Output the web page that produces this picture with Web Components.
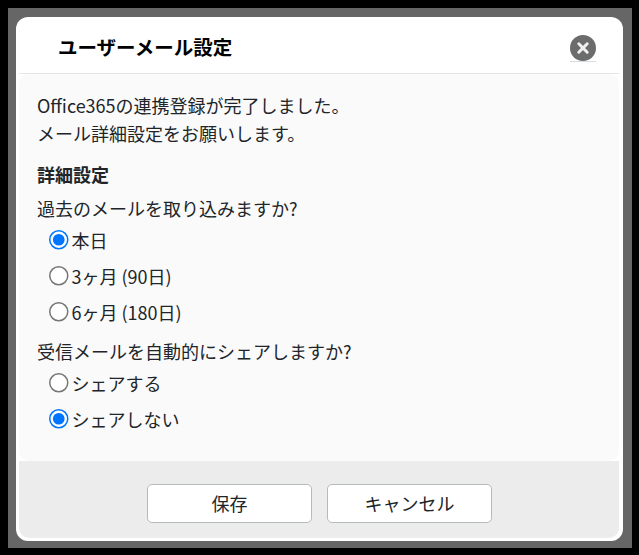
<!DOCTYPE html>
<html lang="ja">
<head>
<meta charset="utf-8">
<title>ユーザーメール設定</title>
<style>
html, body { margin: 0; padding: 0; height: 100%; background: #000; }
body { box-sizing: border-box; height: 555px; padding: 8px 7px 7px 8px; font-family: "Noto Sans CJK JP", "Noto Sans", sans-serif; }
</style>
</head>
<body>
<mail-settings-dialog>
	<span slot="title">ユーザーメール設定</span>
	<p class="intro" style="margin:0 0 13px;font-size:18px;line-height:28px;color:#212529">Office365の連携登録が完了しました。<br>メール詳細設定をお願いします。</p>
	<div style="font-size:18px;line-height:28px;font-weight:700;color:#212529;margin-bottom:6px">詳細設定</div>
	<radio-group question="過去のメールを取り込みますか?" name="past">
		<radio-row value="today" checked>本日</radio-row>
		<radio-row value="90">3ヶ月 (90日)</radio-row>
		<radio-row value="180">6ヶ月 (180日)</radio-row>
	</radio-group>
	<radio-group question="受信メールを自動的にシェアしますか?" name="share">
		<radio-row value="yes">シェアする</radio-row>
		<radio-row value="no" checked>シェアしない</radio-row>
	</radio-group>
	<dialog-button slot="footer">保存</dialog-button>
	<dialog-button slot="footer">キャンセル</dialog-button>
</mail-settings-dialog>

<script>
'use strict';

const dialogTemplate = document.createElement('template');
dialogTemplate.innerHTML = `
<style>
  :host {
    display: flex;
    box-sizing: border-box;
    width: 624px;
    height: 540px;
    padding: 9px 9px 7px 8px;
    background: #666;
  }
  .dialog {
    flex: 1;
    display: flex;
    flex-direction: column;
    box-sizing: border-box;
    padding: 0 4px 3px 3px;
    background: #fff;
    border-radius: 12px;
    overflow: hidden;
  }
  header {
    flex: none;
    display: flex;
    align-items: center;
    justify-content: space-between;
    box-sizing: border-box;
    height: 57px;
    padding: 0 23px 0 39px;
    margin: 0;
    border-bottom: 1px solid #e5e5e5;
  }
  h1 {
    margin: 0;
    font-size: 19.5px;
    line-height: 27px;
    font-weight: 700;
    color: #000;
    position: relative;
    top: 1px;
  }
  .close {
    width: 26px;
    height: 28px;
    padding: 0;
    border: 0;
    border-bottom: 1px solid #d5dce6;
    background: none;
    display: block;
    position: relative;
    top: 3px;
  }
  main {
    flex: 1;
    box-sizing: border-box;
    padding: 17px 18px 0 18px;
    background: #fafafa;
    border-radius: 10px 10px 10px 10px;
  }
  footer {
    flex: none;
    display: flex;
    justify-content: center;
    gap: 15px;
    box-sizing: border-box;
    height: 77px;
    padding: 23px 0 0 1px;
    background: #ececec;
    border-radius: 0 0 10px 10px;
  }
</style>
<div class="dialog">
  <header>
    <h1><slot name="title"></slot></h1>
    <button class="close" aria-label="閉じる">
      <svg width="26" height="26" viewBox="0 0 26 26" style="display:block">
        <circle cx="13" cy="13" r="13" fill="#6c6c6c"/>
        <path d="M8.8 8.8 17.2 17.2M17.2 8.8 8.8 17.2" stroke="#f0f0f0" stroke-width="3" stroke-linecap="round"/>
      </svg>
    </button>
  </header>
  <main><slot></slot></main>
  <footer><slot name="footer"></slot></footer>
</div>`;

class MailSettingsDialog extends HTMLElement {
	constructor() {
		super();
		const shadow = this.attachShadow({mode: 'open'});
		shadow.appendChild(dialogTemplate.content.cloneNode(true));
	}
}

customElements.define('mail-settings-dialog', MailSettingsDialog);

const groupTemplate = document.createElement('template');
groupTemplate.innerHTML = `
<style>
  :host {
    display: block;
    margin-bottom: 3px;
  }
  .question {
    font-size: 18px;
    line-height: 28px;
    color: #212529;
    margin-bottom: 4px;
  }
  .rows {
    padding-left: 12px;
  }
</style>
<div class="question"></div>
<div class="rows"><slot></slot></div>`;

class RadioGroup extends HTMLElement {
	constructor() {
		super();
		const shadow = this.attachShadow({mode: 'open'});
		shadow.appendChild(groupTemplate.content.cloneNode(true));
	}

	connectedCallback() {
		this.shadowRoot.querySelector('.question').textContent = this.getAttribute('question');
		this.querySelectorAll('radio-row').forEach((row) => row.setAttribute('name', this.getAttribute('name')));
	}
}

customElements.define('radio-group', RadioGroup);

const rowTemplate = document.createElement('template');
rowTemplate.innerHTML = `
<style>
  :host {
    display: block;
    height: 36px;
  }
  label {
    display: flex;
    align-items: center;
    height: 28px;
    font-size: 18px;
    line-height: 28px;
    color: #212529;
  }
  input {
    width: 13px;
    height: 13px;
    zoom: 1.5;
    margin: 0 2px 0 0;
    flex: none;
  }
</style>
<label><input type="radio"><span><slot></slot></span></label>`;

class RadioRow extends HTMLElement {
	constructor() {
		super();
		const shadow = this.attachShadow({mode: 'open'});
		shadow.appendChild(rowTemplate.content.cloneNode(true));
	}

	connectedCallback() {
		const input = this.shadowRoot.querySelector('input');
		input.name = this.getAttribute('name') || '';
		input.value = this.getAttribute('value') || '';
		input.checked = this.hasAttribute('checked');
	}
}

customElements.define('radio-row', RadioRow);

const buttonTemplate = document.createElement('template');
buttonTemplate.innerHTML = `
<style>
  :host {
    display: block;
  }
  button {
    box-sizing: border-box;
    display: block;
    width: 165px;
    height: 39px;
    padding: 0 0 2px;
    border: 1px solid #b5babd;
    border-radius: 5px;
    background: #fff;
    color: #212529;
    font: 400 18px/24px "Noto Sans CJK JP", "Noto Sans", sans-serif;
  }
</style>
<button type="button"><slot></slot></button>`;

class DialogButton extends HTMLElement {
	constructor() {
		super();
		const shadow = this.attachShadow({mode: 'open'});
		shadow.appendChild(buttonTemplate.content.cloneNode(true));
	}
}

customElements.define('dialog-button', DialogButton);
</script>
</body>
</html>
